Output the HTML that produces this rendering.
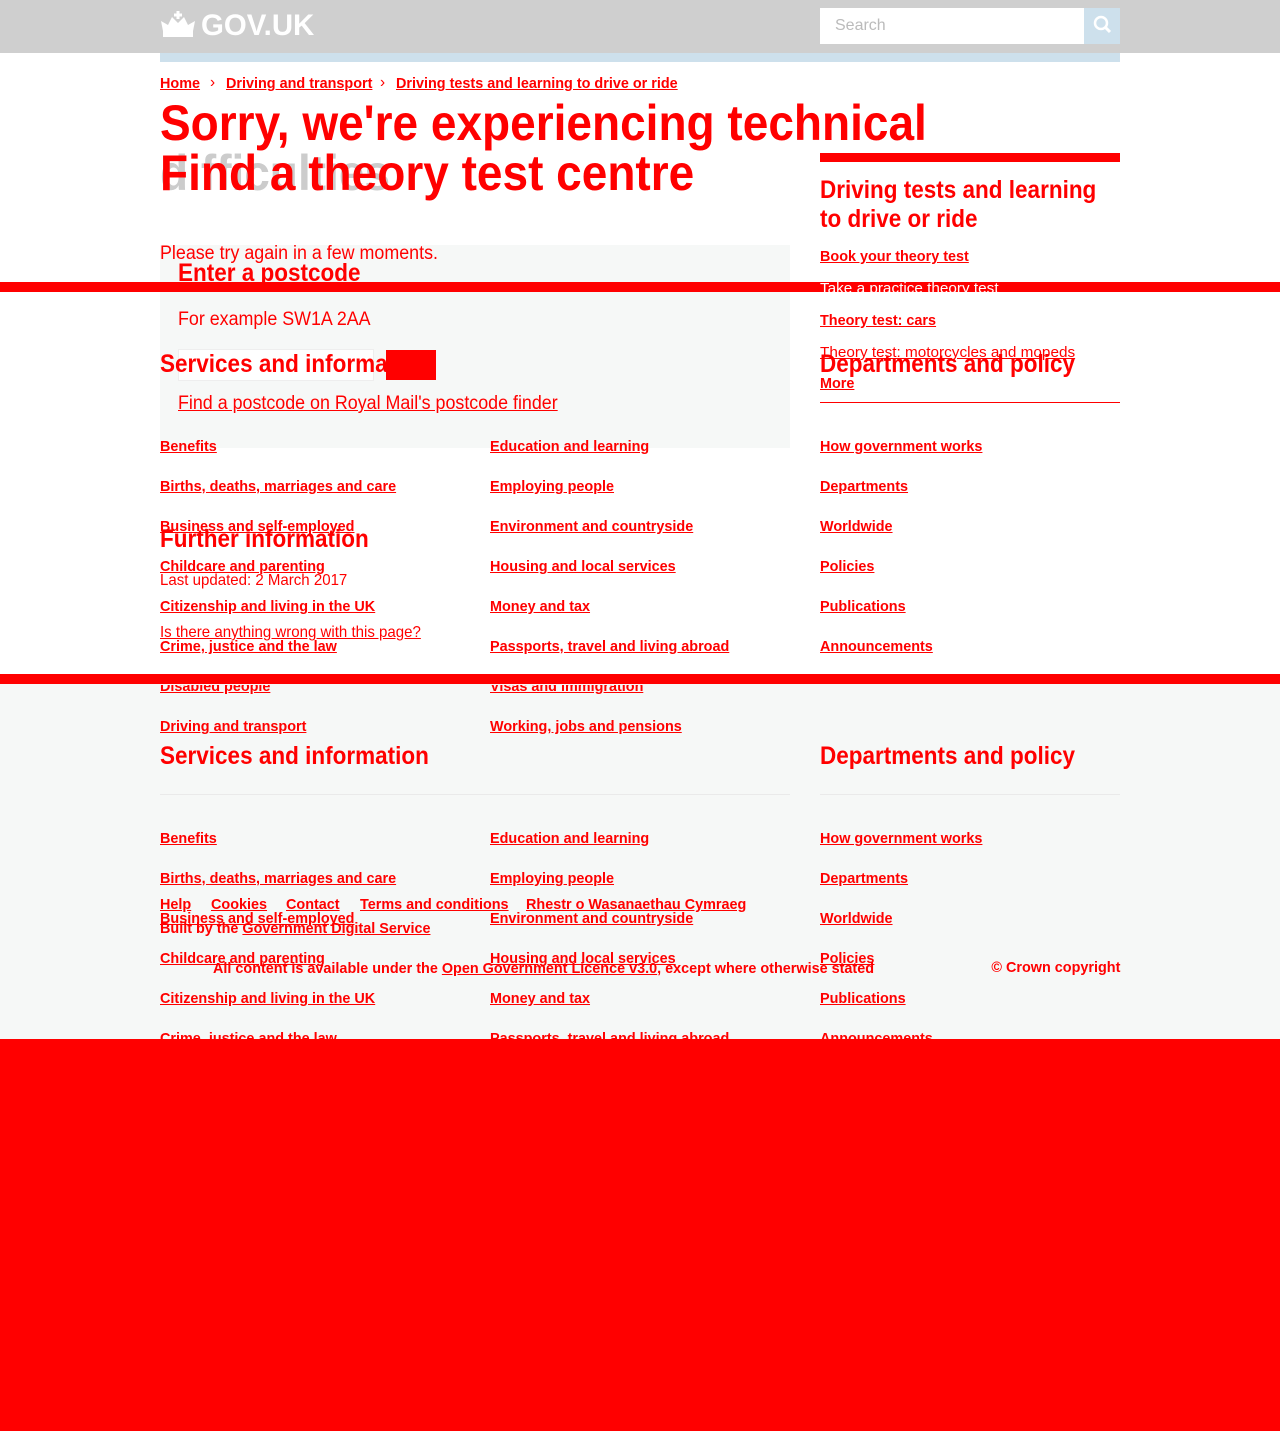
<!DOCTYPE html>
<html><head><meta charset="utf-8"><style>
body{margin:0;width:1280px;height:1431px;position:relative;overflow:hidden;background:#fff;font-family:"Liberation Sans",Arial,sans-serif;color:#f00}
.a{position:absolute}
.t{position:absolute;white-space:nowrap;line-height:1;transform:scaleX(.96);transform-origin:0 0;color:#f00}
.b{font-weight:bold}
.u{text-decoration:underline}
.l{font-size:15px;font-weight:bold;text-decoration:underline}
.h2{font-size:25px;font-weight:bold;transform:scaleX(.9)}
.r{transform:scaleX(.94)}
</style></head><body>
<div class="a" style="left:0;top:0;width:1280px;height:53px;background:#cfcfcf"></div>
<svg class="a" style="left:160px;top:11px" width="36" height="28" viewBox="0 0 36 28"><g fill="#fff"><rect x="3" y="20" width="30" height="6"/><path d="M3 20 L1 10 L8 14 L12 6 L18 12 L24 6 L28 14 L35 10 L33 20Z"/><rect x="16.5" y="0" width="3" height="8"/><rect x="14" y="2.5" width="8" height="3"/></g></svg>
<div class="t b" style="left:201px;top:11px;font-size:30px;color:#fff;transform:scaleX(.98)">GOV.UK</div>
<div class="a" style="left:820px;top:8px;width:264px;height:36px;background:#fff"></div>
<div class="t" style="left:835px;top:18px;font-size:16px;color:#bbb;transform:none">Search</div>
<div class="a" style="left:1084px;top:8px;width:36px;height:36px;background:#cde0ec"></div>
<svg class="a" style="left:1092px;top:15px" width="20" height="20" viewBox="0 0 20 20"><circle cx="9" cy="8" r="6" fill="none" stroke="#fff" stroke-width="2.5"/><path d="M13 12 L18 17" stroke="#fff" stroke-width="3"/></svg>
<div class="a" style="left:160px;top:53px;width:960px;height:9px;background:#cde0ec"></div>

<div class="t l" style="left:160px;top:76px">Home</div>
<div class="t" style="left:210px;top:75px;font-size:16px">›</div>
<div class="t l" style="left:226px;top:76px">Driving and transport</div>
<div class="t" style="left:380px;top:75px;font-size:16px">›</div>
<div class="t l" style="left:396px;top:76px">Driving tests and learning to drive or ride</div>

<div class="t b" style="left:160px;top:98px;font-size:50px;transform:scaleX(.92)">Sorry, we're experiencing technical</div>
<div class="t b" style="left:160px;top:148px;font-size:50px;color:#ccc;transform:scaleX(.92)">difficulties</div>
<div class="t b" style="left:160px;top:148px;font-size:50px;transform:scaleX(.92)">Find a theory test centre</div>

<div class="a" style="left:160px;top:245px;width:630px;height:203px;background:#f6f8f7"></div>
<div class="t r" style="left:160px;top:244px;font-size:19px">Please try again in a few moments.</div>
<div class="t h2" style="left:178px;top:261px">Enter a postcode</div>
<div class="t r" style="left:178px;top:310px;font-size:19px">For example SW1A 2AA</div>
<div class="a" style="left:178px;top:349px;width:194px;height:30px;background:#fff;border:1px solid #eee"></div>
<div class="a" style="left:386px;top:350px;width:50px;height:30px;background:#f00"></div>
<div class="t h2" style="left:160px;top:352px">Services and informa</div>
<div class="t u r" style="left:178px;top:394px;font-size:19px">Find a postcode on Royal Mail's postcode finder</div>

<div class="a" style="left:0;top:282px;width:1280px;height:10px;background:#f00"></div>

<div class="a" style="left:820px;top:153px;width:300px;height:9px;background:#f00"></div>
<div class="t h2" style="left:820px;top:176px;line-height:29px">Driving tests and learning<br>to drive or ride</div>
<div class="t l" style="left:820px;top:249px">Book your theory test</div>
<div class="t l" style="left:820px;top:281px;color:#fff;font-weight:normal;transform:scaleX(1.02)">Take a practice theory test</div>
<div class="t l" style="left:820px;top:313px">Theory test: cars</div>
<div class="t l" style="left:820px;top:345px;font-weight:normal;transform:scaleX(1.02)">Theory test: motorcycles and mopeds</div>
<div class="t h2" style="left:820px;top:352px">Departments and policy</div>
<div class="t l" style="left:820px;top:376px">More</div>
<div class="a" style="left:820px;top:402px;width:300px;height:1px;background:#f00"></div>

<div class="t l" style="left:160px;top:439px">Benefits</div>
<div class="t l" style="left:160px;top:479px">Births, deaths, marriages and care</div>
<div class="t l" style="left:160px;top:519px">Business and self-employed</div>
<div class="t l" style="left:160px;top:559px">Childcare and parenting</div>
<div class="t l" style="left:160px;top:599px">Citizenship and living in the UK</div>
<div class="t l" style="left:160px;top:639px">Crime, justice and the law</div>
<div class="t l" style="left:490px;top:439px">Education and learning</div>
<div class="t l" style="left:490px;top:479px">Employing people</div>
<div class="t l" style="left:490px;top:519px">Environment and countryside</div>
<div class="t l" style="left:490px;top:559px">Housing and local services</div>
<div class="t l" style="left:490px;top:599px">Money and tax</div>
<div class="t l" style="left:490px;top:639px">Passports, travel and living abroad</div>
<div class="t l" style="left:820px;top:439px">How government works</div>
<div class="t l" style="left:820px;top:479px">Departments</div>
<div class="t l" style="left:820px;top:519px">Worldwide</div>
<div class="t l" style="left:820px;top:559px">Policies</div>
<div class="t l" style="left:820px;top:599px">Publications</div>
<div class="t l" style="left:820px;top:639px">Announcements</div>

<div class="t h2" style="left:160px;top:527px">Further information</div>
<div class="t r" style="left:160px;top:573px;font-size:16px">Last updated: 2 March 2017</div>
<div class="t u r" style="left:160px;top:625px;font-size:16px">Is there anything wrong with this page?</div>

<div class="a" style="left:0;top:684px;width:1280px;height:355px;background:#f6f8f7"></div>
<div class="a" style="left:0;top:674px;width:1280px;height:10px;background:#f00"></div>
<div class="a" style="left:0;top:1039px;width:1280px;height:392px;background:#f00"></div>

<div class="t l" style="left:160px;top:679px;clip-path:inset(6px 0 0 0)">Disabled people</div>
<div class="t l" style="left:490px;top:679px;clip-path:inset(6px 0 0 0)">Visas and immigration</div>
<div class="t l" style="left:160px;top:719px">Driving and transport</div>
<div class="t l" style="left:490px;top:719px">Working, jobs and pensions</div>

<div class="t h2" style="left:160px;top:744px">Services and information</div>
<div class="t h2" style="left:820px;top:744px">Departments and policy</div>
<div class="a" style="left:160px;top:794px;width:630px;height:1px;background:#eaeaea"></div>
<div class="a" style="left:820px;top:794px;width:300px;height:1px;background:#eaeaea"></div>

<div class="t l" style="left:160px;top:831px">Benefits</div>
<div class="t l" style="left:160px;top:871px">Births, deaths, marriages and care</div>
<div class="t l" style="left:160px;top:911px">Business and self-employed</div>
<div class="t l" style="left:160px;top:951px">Childcare and parenting</div>
<div class="t l" style="left:160px;top:991px">Citizenship and living in the UK</div>
<div class="t l" style="left:160px;top:1031px">Crime, justice and the law</div>
<div class="t l" style="left:490px;top:831px">Education and learning</div>
<div class="t l" style="left:490px;top:871px">Employing people</div>
<div class="t l" style="left:490px;top:911px">Environment and countryside</div>
<div class="t l" style="left:490px;top:951px">Housing and local services</div>
<div class="t l" style="left:490px;top:991px">Money and tax</div>
<div class="t l" style="left:490px;top:1031px">Passports, travel and living abroad</div>
<div class="t l" style="left:820px;top:831px">How government works</div>
<div class="t l" style="left:820px;top:871px">Departments</div>
<div class="t l" style="left:820px;top:911px">Worldwide</div>
<div class="t l" style="left:820px;top:951px">Policies</div>
<div class="t l" style="left:820px;top:991px">Publications</div>
<div class="t l" style="left:820px;top:1031px">Announcements</div>

<div class="t l" style="left:160px;top:897px">Help</div>
<div class="t l" style="left:211px;top:897px">Cookies</div>
<div class="t l" style="left:286px;top:897px">Contact</div>
<div class="t l" style="left:360px;top:897px">Terms and conditions</div>
<div class="t l" style="left:526px;top:897px">Rhestr o Wasanaethau Cymraeg</div>
<div class="t b" style="left:160px;top:921px;font-size:15px">Built by the <span class="u">Government Digital Service</span></div>
<div class="t b" style="left:213px;top:961px;font-size:15px">All content is available under the <span class="u">Open Government Licence v3.0</span>, except where otherwise stated</div>
<div class="t b" style="right:160px;top:960px;font-size:15px;transform-origin:100% 0">© Crown copyright</div>
</body></html>
